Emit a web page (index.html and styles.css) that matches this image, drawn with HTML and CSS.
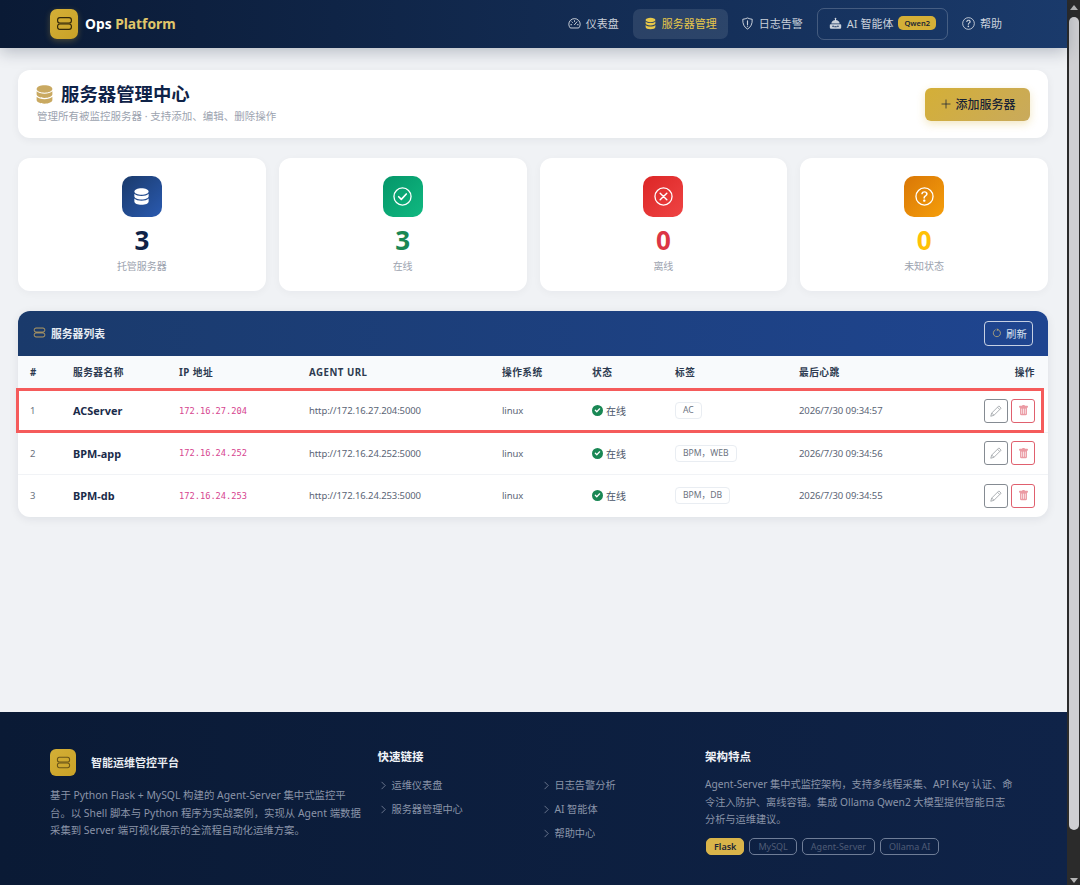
FILE: index.html
```html
<!DOCTYPE html>
<html lang="zh-CN">
<head>
    <meta charset="UTF-8">
    <meta name="viewport" content="width=device-width, initial-scale=1.0">
    <title>服务器管理中心 - Ops Platform</title>
    <link rel="stylesheet" href="styles.css">
</head>
<body>
    <svg class="sprite" xmlns="http://www.w3.org/2000/svg">
        <symbol id="i-hdd" viewBox="0 0 16 16">
            <rect x="1.5" y="2.5" width="13" height="5" rx="2.2" fill="none" stroke="currentColor" stroke-width="1.1"/>
            <rect x="1.5" y="8.5" width="13" height="5" rx="2.2" fill="none" stroke="currentColor" stroke-width="1.1"/>
        </symbol>
        <symbol id="i-db" viewBox="0 0 16 16">
            <path fill="currentColor" d="M8 1c3.3 0 6 1.200 6 2.800S11.300 6.600 8 6.600 2 5.400 2 3.800 4.700 1 8 1z"/>
            <path fill="currentColor" d="M2 5.600v2.200c0 1.600 2.700 2.800 6 2.800s6-1.200 6-2.800V5.600c-1.200 1.200-3.500 1.900-6 1.900s-4.800-.7-6-1.900z"/>
            <path fill="currentColor" d="M2 9.700v2.500C2 13.800 4.700 15 8 15s6-1.200 6-2.800V9.700c-1.200 1.200-3.500 1.900-6 1.900s-4.800-.7-6-1.900z"/>
        </symbol>
        <symbol id="i-gauge" viewBox="0 0 16 16">
            <path fill="none" stroke="currentColor" stroke-width="1.2" d="M2.800 13.500h10.400A7 7 0 0 0 15 9 7 7 0 0 0 1 9a7 7 0 0 0 1.800 4.500z"/>
            <path fill="none" stroke="currentColor" stroke-width="1.2" stroke-linecap="round" d="M8 9.500l3-3.500M3.500 9.500h1M11.500 9.500h1M8 4.500v1M4.800 6l.7.7"/>
        </symbol>
        <symbol id="i-shield" viewBox="0 0 16 16">
            <path fill="none" stroke="currentColor" stroke-width="1.2" d="M8 1.200c2 .9 3.800 1.400 5.800 1.600.3 5.700-1.900 10.100-5.800 12-3.900-1.900-6.100-6.300-5.800-12C4.200 2.600 6 2.100 8 1.200z"/>
            <path fill="none" stroke="currentColor" stroke-width="1.4" stroke-linecap="round" d="M8 4.800v4.300"/>
            <circle cx="8" cy="11.300" r=".8" fill="currentColor"/>
        </symbol>
        <symbol id="i-robot" viewBox="0 0 16 16">
            <circle cx="8" cy="1.900" r="1.100" fill="currentColor"/>
            <path fill="currentColor" d="M7.400 2.500h1.200v1.800H7.400z"/>
            <path fill="currentColor" d="M8 3.700c2.800 0 4.800 1.700 5.200 4.300H2.800C3.200 5.400 5.200 3.700 8 3.700z"/>
            <path fill="currentColor" fill-rule="evenodd" d="M2 8.800h12a1 1 0 0 1 1 1V13a1.500 1.500 0 0 1-1.500 1.500h-11A1.500 1.500 0 0 1 1 13V9.800a1 1 0 0 1 1-1zm3 1.700a1 1 0 1 0 0 2 1 1 0 0 0 0-2zm6 0a1 1 0 1 0 0 2 1 1 0 0 0 0-2zm-4.500 1v1h3v-1z"/>
        </symbol>
        <symbol id="i-question" viewBox="0 0 16 16">
            <circle cx="8" cy="8" r="7.200" fill="none" stroke="currentColor" stroke-width="1.100"/>
            <path fill="currentColor" d="M5.255 5.786a.237.237 0 0 0 .241.247h.825c.138 0 .248-.113.266-.25.09-.656.54-1.134 1.342-1.134.686 0 1.314.343 1.314 1.168 0 .635-.374.927-.965 1.371-.673.489-1.206 1.06-1.168 1.987l.003.217a.25.25 0 0 0 .25.246h.811a.25.25 0 0 0 .25-.25v-.105c0-.718.273-.927 1.01-1.486.609-.463 1.244-.977 1.244-2.056 0-1.511-1.276-2.241-2.673-2.241-1.267 0-2.655.59-2.75 2.286m1.557 5.763c0 .533.425.927 1.01.927.609 0 1.028-.394 1.028-.927 0-.552-.42-.94-1.029-.94-.584 0-1.009.388-1.009.94"/>
        </symbol>
        <symbol id="i-check" viewBox="0 0 16 16">
            <circle cx="8" cy="8" r="7.200" fill="none" stroke="currentColor" stroke-width="1.100"/>
            <path fill="none" stroke="currentColor" stroke-width="1.400" stroke-linecap="round" stroke-linejoin="round" d="M4.800 8.200l2.200 2.200 4.200-4.500"/>
        </symbol>
        <symbol id="i-cross" viewBox="0 0 16 16">
            <circle cx="8" cy="8" r="7.200" fill="none" stroke="currentColor" stroke-width="1.100"/>
            <path fill="none" stroke="currentColor" stroke-width="1.200" stroke-linecap="round" d="M5.200 5.200l5.600 5.600M10.800 5.200l-5.600 5.600"/>
        </symbol>
        <symbol id="i-check-fill" viewBox="0 0 16 16">
            <path fill="currentColor" fill-rule="evenodd" d="M8 0a8 8 0 1 1 0 16A8 8 0 0 1 8 0zm3.700 4.900a.9.900 0 0 0-1.300 0L7 8.500 5.500 7a.9.900 0 0 0-1.300 1.300l2.100 2.100a.9.900 0 0 0 1.300 0l4.100-4.200a.9.900 0 0 0 0-1.300z"/>
        </symbol>
        <symbol id="i-pencil" viewBox="0 0 16 16">
            <path fill="none" stroke="currentColor" stroke-width="1.200" stroke-linejoin="round" d="M11.800 1.200l3 3L5.300 13.700l-4.300 1.300 1.300-4.300zM10 3l3 3M2.300 10.700l3 3"/>
        </symbol>
        <symbol id="i-trash" viewBox="0 0 16 16">
            <path fill="currentColor" d="M2.500 1a1 1 0 0 0-1 1v1a1 1 0 0 0 1 1H3v9a2 2 0 0 0 2 2h6a2 2 0 0 0 2-2V4h.5a1 1 0 0 0 1-1V2a1 1 0 0 0-1-1H10a1 1 0 0 0-1-1H7a1 1 0 0 0-1 1zm3 4a.5.5 0 0 1 .5.5v7a.5.5 0 0 1-1 0v-7a.5.5 0 0 1 .5-.5M8 5a.5.5 0 0 1 .5.5v7a.5.5 0 0 1-1 0v-7A.5.5 0 0 1 8 5m3 .5v7a.5.5 0 0 1-1 0v-7a.5.5 0 0 1 1 0"/>
        </symbol>
        <symbol id="i-refresh" viewBox="0 0 16 16">
            <path fill="none" stroke="currentColor" stroke-width="1.500" stroke-linecap="round" d="M10 2.700A5.800 5.800 0 1 1 5.200 2.900"/>
            <path fill="currentColor" d="M7.700 0.500v4.600l3-2.300z"/>
        </symbol>
        <symbol id="i-chevron" viewBox="0 0 16 16">
            <path fill="none" stroke="currentColor" stroke-width="1.300" d="M4.500 1.500L11 8l-6.500 6.500"/>
        </symbol>
        <symbol id="i-plus" viewBox="0 0 16 16">
            <path fill="none" stroke="currentColor" stroke-width="1.200" stroke-linecap="round" d="M8 1.500v13M1.500 8h13"/>
        </symbol>
    </svg>

    <div class="shell">
        <div class="page">
            <nav class="navbar">
                <a class="brand" href="#">
                    <span class="brand-icon"><svg class="icon-17"><use href="#i-hdd"/></svg></span>
                    <span class="brand-text">Ops <em>Platform</em></span>
                </a>
                <div class="nav-links">
                    <a class="nav-link nav-first" href="#"><svg class="icon-13"><use href="#i-gauge"/></svg>仪表盘</a>
                    <a class="nav-link active" href="#"><svg class="icon-13"><use href="#i-db"/></svg>服务器管理</a>
                    <a class="nav-link" href="#"><svg class="icon-13"><use href="#i-shield"/></svg>日志告警</a>
                    <a class="nav-link nav-ai" href="#"><svg class="icon-13"><use href="#i-robot"/></svg>AI 智能体<span class="badge-qwen">Qwen2</span></a>
                    <a class="nav-link" href="#"><svg class="icon-13"><use href="#i-question"/></svg>帮助</a>
                </div>
            </nav>

            <main class="content">
                <section class="page-head">
                    <div>
                        <h1><svg class="title-icon"><use href="#i-db"/></svg>服务器管理中心</h1>
                        <p>管理所有被监控服务器 · 支持添加、编辑、删除操作</p>
                    </div>
                    <button class="btn-add"><svg class="icon-10"><use href="#i-plus"/></svg>添加服务器</button>
                </section>

                <section class="stats">
                    <div class="stat-card">
                        <div class="stat-icon blue"><svg class="icon-19"><use href="#i-db"/></svg></div>
                        <div class="stat-num num-navy">3</div>
                        <div class="stat-label">托管服务器</div>
                    </div>
                    <div class="stat-card">
                        <div class="stat-icon green"><svg class="icon-19"><use href="#i-check"/></svg></div>
                        <div class="stat-num num-green">3</div>
                        <div class="stat-label">在线</div>
                    </div>
                    <div class="stat-card">
                        <div class="stat-icon red"><svg class="icon-19"><use href="#i-cross"/></svg></div>
                        <div class="stat-num num-red">0</div>
                        <div class="stat-label">离线</div>
                    </div>
                    <div class="stat-card">
                        <div class="stat-icon orange"><svg class="icon-19"><use href="#i-question"/></svg></div>
                        <div class="stat-num num-yellow">0</div>
                        <div class="stat-label">未知状态</div>
                    </div>
                </section>

                <section class="server-card">
                    <div class="card-head">
                        <h2><svg class="icon-13"><use href="#i-hdd"/></svg>服务器列表</h2>
                        <button class="btn-refresh"><svg class="icon-10"><use href="#i-refresh"/></svg>刷新</button>
                    </div>
                    <table class="server-table">
                        <colgroup>
                            <col class="col-num"><col class="col-name"><col class="col-ip"><col class="col-url">
                            <col class="col-os"><col class="col-status"><col class="col-tags"><col class="col-beat"><col class="col-ops">
                        </colgroup>
                        <thead>
                            <tr>
                                <th>#</th><th>服务器名称</th><th>IP 地址</th><th>AGENT URL</th><th>操作系统</th>
                                <th>状态</th><th>标签</th><th>最后心跳</th><th class="ops">操作</th>
                            </tr>
                        </thead>
                        <tbody>
                            <tr>
                                <td class="idx">1</td><td class="name">ACServer</td><td class="ip">172.16.27.204</td>
                                <td>http://172.16.27.204:5000</td><td>linux</td>
                                <td><span class="status"><svg class="icon-11"><use href="#i-check-fill"/></svg>在线</span></td>
                                <td><span class="tag">AC</span></td><td>2026/7/30 09:34:57</td>
                                <td class="ops"><button class="btn-edit"><svg class="icon-12"><use href="#i-pencil"/></svg></button><button class="btn-del"><svg class="icon-11"><use href="#i-trash"/></svg></button></td>
                            </tr>
                            <tr>
                                <td class="idx">2</td><td class="name">BPM-app</td><td class="ip">172.16.24.252</td>
                                <td>http://172.16.24.252:5000</td><td>linux</td>
                                <td><span class="status"><svg class="icon-11"><use href="#i-check-fill"/></svg>在线</span></td>
                                <td><span class="tag">BPM，WEB</span></td><td>2026/7/30 09:34:56</td>
                                <td class="ops"><button class="btn-edit"><svg class="icon-12"><use href="#i-pencil"/></svg></button><button class="btn-del"><svg class="icon-11"><use href="#i-trash"/></svg></button></td>
                            </tr>
                            <tr>
                                <td class="idx">3</td><td class="name">BPM-db</td><td class="ip">172.16.24.253</td>
                                <td>http://172.16.24.253:5000</td><td>linux</td>
                                <td><span class="status"><svg class="icon-11"><use href="#i-check-fill"/></svg>在线</span></td>
                                <td><span class="tag">BPM，DB</span></td><td>2026/7/30 09:34:55</td>
                                <td class="ops"><button class="btn-edit"><svg class="icon-12"><use href="#i-pencil"/></svg></button><button class="btn-del"><svg class="icon-11"><use href="#i-trash"/></svg></button></td>
                            </tr>
                        </tbody>
                    </table>
                    <div class="row-highlight"></div>
                </section>
            </main>

            <footer class="footer">
                <div class="footer-col">
                    <div class="footer-brand">
                        <span class="footer-logo"><svg class="icon-15"><use href="#i-hdd"/></svg></span>
                        <strong>智能运维管控平台</strong>
                    </div>
                    <p class="footer-desc">基于 Python Flask + MySQL 构建的 Agent-Server 集中式监控平台。以 Shell 脚本与 Python 程序为实战案例，实现从 Agent 端数据采集到 Server 端可视化展示的全流程自动化运维方案。</p>
                </div>
                <div class="footer-col">
                    <h4>快速链接</h4>
                    <ul class="footer-links">
                        <li><svg class="icon-9"><use href="#i-chevron"/></svg>运维仪表盘</li>
                        <li><svg class="icon-9"><use href="#i-chevron"/></svg>日志告警分析</li>
                        <li><svg class="icon-9"><use href="#i-chevron"/></svg>服务器管理中心</li>
                        <li><svg class="icon-9"><use href="#i-chevron"/></svg>AI 智能体</li>
                        <li class="link-last"><svg class="icon-9"><use href="#i-chevron"/></svg>帮助中心</li>
                    </ul>
                </div>
                <div class="footer-col">
                    <h4>架构特点</h4>
                    <p class="footer-arch">Agent-Server 集中式监控架构，支持多线程采集、API Key 认证、命令注入防护、离线容错。集成 Ollama Qwen2 大模型提供智能日志分析与运维建议。</p>
                    <div class="chips">
                        <span class="chip chip-gold">Flask</span>
                        <span class="chip">MySQL</span>
                        <span class="chip">Agent-Server</span>
                        <span class="chip">Ollama AI</span>
                    </div>
                </div>
            </footer>
        </div>

        <aside class="scrollbar">
            <span class="arrow-up"></span>
            <span class="thumb"></span>
            <span class="arrow-down"></span>
        </aside>
    </div>
</body>
</html>
```

FILE: styles.css
```css
* {
    box-sizing: border-box;
}
body {
    margin: 0;
    height: 885px;
    overflow: hidden;
    font-family: "Noto Sans", "Noto Sans CJK SC", sans-serif;
    font-size: 10px;
    color: #4a5568;
    background: #f0f2f5;
}
a {
    color: inherit;
    text-decoration: none;
}
button {
    font-family: inherit;
    cursor: pointer;
}
svg {
    flex: none;
    display: block;
}
.sprite {
    display: none;
}
.icon-9 { width: 9px; height: 9px; }
.icon-10 { width: 10px; height: 10px; }
.icon-11 { width: 11px; height: 11px; }
.icon-12 { width: 12px; height: 12px; }
.icon-13 { width: 13px; height: 13px; }
.icon-15 { width: 15px; height: 15px; }
.icon-17 { width: 17px; height: 17px; }
.icon-19 { width: 19px; height: 19px; }

.shell {
    display: flex;
    height: 885px;
}
.page {
    flex: 1;
    min-width: 0;
    display: flex;
    flex-direction: column;
}

/* top bar */
.navbar {
    height: 48px;
    flex: none;
    display: flex;
    align-items: center;
    justify-content: space-between;
    padding: 0 54px 0 50px;
    background: linear-gradient(90deg, #0a1a35, #1a3a6b);
    box-shadow: 0 4px 16px rgba(10, 26, 53, 0.25);
    position: relative;
}
.brand {
    display: flex;
    align-items: center;
    gap: 7px;
    margin-top: -1px;
}
.brand-icon {
    width: 28px;
    height: 30px;
    border-radius: 7px;
    display: flex;
    align-items: center;
    justify-content: center;
    color: #33280a;
    background: linear-gradient(135deg, #d4af37, #c9a227);
    box-shadow: 0 2px 6px rgba(212, 175, 55, 0.3);
}
.brand-text {
    font-size: 13.800px;
    font-weight: 700;
    color: #fff;
}
.brand-text em {
    font-style: normal;
    color: #e0c76a;
}
.nav-links {
    display: flex;
    align-items: center;
    gap: 2px;
    margin-top: -1px;
}
.nav-link {
    height: 30px;
    padding: 0 11px 1px;
    display: flex;
    align-items: center;
    gap: 5px;
    font-size: 11px;
    color: rgba(255, 255, 255, 0.78);
    border-radius: 7px;
}
.nav-first {
    margin-right: 1px;
}
.nav-link.active {
    color: #e8c84a;
    background: rgba(255, 255, 255, 0.1);
}
.nav-ai {
    height: 32px;
    margin: 0 1px;
    border: 1px solid rgba(255, 255, 255, 0.2);
}
.badge-qwen {
    height: 14px;
    padding: 0 6px;
    display: flex;
    align-items: center;
    font-size: 7.500px;
    font-weight: 600;
    color: #1a2435;
    border-radius: 5px;
    background: #d4af37;
}

/* main area */
.content {
    flex: 1;
    padding: 22px 19px 0 18px;
    min-height: 0;
}
.page-head {
    height: 68px;
    display: flex;
    align-items: center;
    justify-content: space-between;
    padding: 0 18px 0 19px;
    background: #fff;
    border-radius: 12px;
    box-shadow: 0 2px 8px rgba(10, 26, 53, 0.06);
}
.page-head h1 {
    margin: -3px 0 0;
    display: flex;
    align-items: center;
    gap: 5.600px;
    font-size: 18.400px;
    line-height: 24px;
    font-weight: 700;
    color: #0f2348;
}
.title-icon {
    width: 21px;
    height: 21px;
    margin-left: -2.600px;
    color: #c9a961;
}
.page-head p {
    margin: 3px 0 0;
    font-size: 10.500px;
    line-height: 14px;
    color: #9ca3af;
}
.btn-add {
    width: 105px;
    height: 33px;
    padding: 0 0 0 2px;
    border: none;
    border-radius: 6px;
    display: flex;
    align-items: center;
    justify-content: center;
    gap: 4px;
    font-size: 12px;
    font-weight: 500;
    color: #1a2435;
    background: linear-gradient(135deg, #d4af37, #c9aa5c);
    box-shadow: 0 3px 8px rgba(212, 175, 55, 0.3);
}

.stats {
    margin-top: 20px;
    display: grid;
    grid-template-columns: repeat(4, 1fr);
    gap: 13px;
}
.stat-card {
    height: 133px;
    padding-top: 18px;
    display: flex;
    flex-direction: column;
    align-items: center;
    background: #fff;
    border-radius: 12px;
    box-shadow: 0 2px 8px rgba(10, 26, 53, 0.04);
}
.stat-icon {
    width: 40px;
    height: 41px;
    border-radius: 10px;
    display: flex;
    align-items: center;
    justify-content: center;
    color: #fff;
}
.blue { background: linear-gradient(135deg, #1a3a6b, #2a5ab0); }
.green { background: linear-gradient(135deg, #059669, #10b981); }
.red { background: linear-gradient(135deg, #dc2626, #ef4444); }
.orange { background: linear-gradient(135deg, #d97706, #f59e0b); }
.stat-num {
    margin-top: 6px;
    font-size: 26px;
    line-height: 34px;
    font-weight: 700;
}
.num-navy { color: #0f2348; }
.num-green { color: #198754; }
.num-red { color: #dc3545; }
.num-yellow { color: #ffc107; }
.stat-label {
    margin-top: 2px;
    font-size: 10px;
    line-height: 14px;
    color: #9ca3af;
}

/* server table */
.server-card {
    position: relative;
    margin-top: 20px;
    background: #fff;
    border-radius: 12px;
    box-shadow: 0 2px 10px rgba(10, 26, 53, 0.08);
}
.card-head {
    height: 45px;
    display: flex;
    align-items: center;
    justify-content: space-between;
    padding: 0 15px;
    border-radius: 12px 12px 0 0;
    background: linear-gradient(90deg, #1a3a6b, #1f4590);
}
.card-head h2 {
    margin: -2px 0 0;
    display: flex;
    align-items: center;
    gap: 5px;
    font-size: 10.800px;
    font-weight: 700;
    color: #e6ebf2;
}
.card-head h2 svg {
    color: #c9a961;
}
.btn-refresh {
    width: 49px;
    height: 25px;
    padding: 0 0 1px 2px;
    display: flex;
    align-items: center;
    justify-content: center;
    gap: 4px;
    font-size: 10.400px;
    color: #d8e0ee;
    background: transparent;
    border: 1px solid rgba(255, 255, 255, 0.75);
    border-radius: 4px;
}
.btn-refresh svg {
    color: #a89f7a;
}
.server-table {
    width: 100%;
    table-layout: fixed;
    border-collapse: collapse;
}
.col-num { width: 43px; }
.col-name { width: 106px; }
.col-ip { width: 130px; }
.col-url { width: 193px; }
.col-os { width: 90px; }
.col-status { width: 83px; }
.col-tags { width: 124px; }
.col-ops { width: 90px; }
.server-table th {
    height: 34px;
    padding: 0 0 2px 12px;
    text-align: left;
    font-size: 9.700px;
    font-weight: 700;
    letter-spacing: 0.5px;
    color: #2d3a50;
    background: #f8fafc;
}
.server-table td {
    height: 42px;
    padding: 0 0 0 12px;
    font-size: 9.500px;
    letter-spacing: -0.1px;
    color: #5a6475;
    border-bottom: 1px solid #f1f3f6;
}
.server-table tr:last-child td {
    height: 43px;
    border-bottom: none;
}
.server-table .ops {
    padding: 0 13px 0 0;
    text-align: right;
}
.server-table th.ops {
    padding-bottom: 2px;
}
.server-table .idx {
    color: #6b7280;
}
.server-table .name {
    font-size: 10.900px;
    font-weight: 700;
    letter-spacing: 0;
    color: #1a2b4a;
}
.server-table .ip {
    font-family: "DejaVu Sans Mono", monospace;
    font-size: 8.700px;
    letter-spacing: 0;
    color: #d6458f;
}
.status {
    display: flex;
    align-items: center;
    gap: 3px;
    font-size: 10px;
    letter-spacing: 0;
    color: #4a5568;
}
.status svg {
    color: #198754;
}
.tag {
    display: inline-block;
    padding: 1px 7px;
    font-size: 8.600px;
    line-height: 13px;
    letter-spacing: 0;
    color: #6b7280;
    background: #fff;
    border: 1px solid #e9edf2;
    border-radius: 4px;
}
.btn-edit, .btn-del {
    width: 24px;
    height: 24px;
    padding: 0;
    display: inline-flex;
    align-items: center;
    justify-content: center;
    vertical-align: middle;
    background: #fff;
    border-radius: 3px;
}
.btn-edit {
    color: #a4a8ad;
    border: 1px solid #858b92;
}
.btn-del {
    margin-left: 3px;
    color: #eb9aa3;
    border: 1px solid #e0606e;
}
/* marks the first row in the screenshot */
.row-highlight {
    position: absolute;
    left: -2px;
    top: 77px;
    width: 1028px;
    height: 45px;
    border: 3px solid #f55b5b;
    pointer-events: none;
}

/* footer */
.footer {
    height: 173px;
    flex: none;
    display: grid;
    grid-template-columns: repeat(3, 311.500px);
    gap: 16px;
    padding: 37px 0 0 50px;
    color: #8a94a8;
    background: linear-gradient(90deg, #0a1a35, #0f2348);
}
.footer-brand {
    display: flex;
    align-items: center;
    gap: 15px;
}
.footer-logo {
    width: 26px;
    height: 27px;
    border-radius: 6px;
    display: flex;
    align-items: center;
    justify-content: center;
    color: #6b5518;
    background: linear-gradient(135deg, #d4af37, #c9a227);
}
.footer-brand strong {
    margin-top: -2px;
    font-size: 11px;
    font-weight: 700;
    color: #e8ecf2;
}
.footer p {
    margin: 0;
    font-size: 10.400px;
    line-height: 17.500px;
}
.footer .footer-desc {
    margin-top: 11px;
}
.footer h4 {
    margin: 0;
    font-size: 11.500px;
    line-height: 16px;
    font-weight: 700;
    color: #f0f3f8;
}
.footer-links {
    list-style: none;
    margin: 13px 0 0;
    padding: 0;
    display: grid;
    grid-template-columns: 163px 1fr;
    row-gap: 10px;
}
.footer-links li {
    display: flex;
    align-items: center;
    gap: 4px;
    padding-left: 1px;
    font-size: 10.200px;
    line-height: 14px;
}
.footer-links .link-last {
    grid-column: 2;
}
.footer .footer-arch {
    margin-top: 11px;
    max-width: 309px;
    font-size: 10.200px;
}
.chips {
    margin: 9px 0 0 1px;
    display: flex;
    gap: 5px;
}
.chip {
    height: 17px;
    padding: 0 8px;
    display: flex;
    align-items: center;
    font-size: 9px;
    color: #4f5c76;
    border: 1px solid #6f7d97;
    border-radius: 5px;
}
.chip-gold {
    padding: 0 7px;
    color: #1a2435;
    font-weight: 600;
    background: #d9b44a;
    border-color: #d9b44a;
}

/* window scrollbar */
.scrollbar {
    width: 13px;
    flex: none;
    padding: 5px 1px 4px 2px;
    display: flex;
    flex-direction: column;
    align-items: center;
    background: #2b2b2b;
}
.arrow-up, .arrow-down {
    width: 0;
    height: 0;
    flex: none;
    border-left: 4px solid transparent;
    border-right: 4px solid transparent;
}
.arrow-up {
    border-bottom: 5px solid #b5b5b5;
}
.arrow-down {
    border-top: 5px solid #b5b5b5;
    margin-top: 48px;
}
.thumb {
    width: 10px;
    height: 813px;
    margin-top: 7px;
    flex: none;
    border-radius: 5px;
    background: #cfcfd2;
}
```
